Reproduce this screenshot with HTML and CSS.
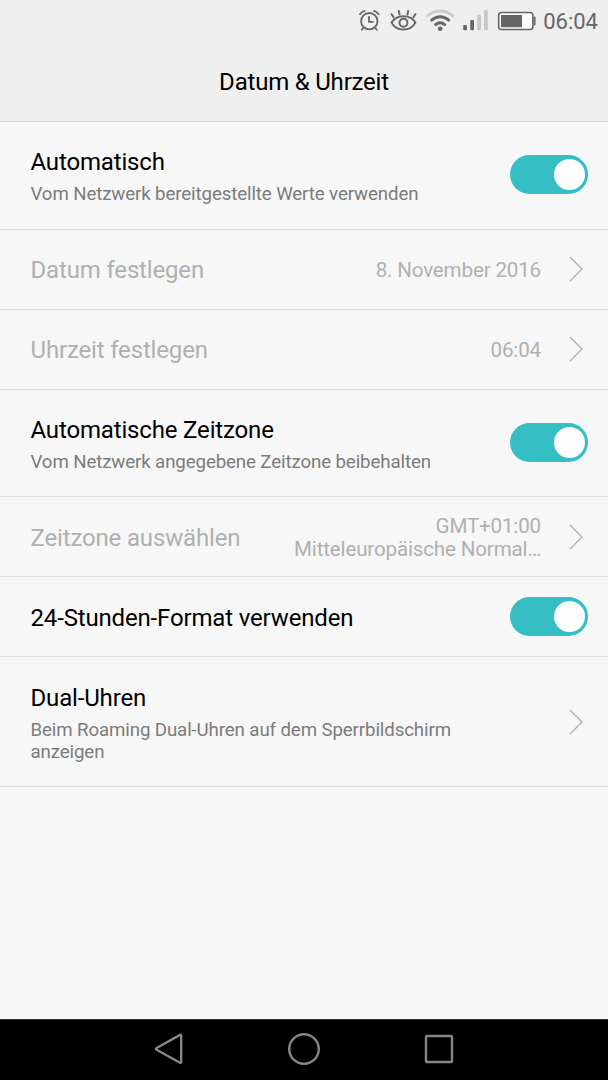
FILE: index.html
```
<!DOCTYPE html>
<html lang="de">
<head>
    <meta charset="UTF-8">
    <meta name="viewport" content="width=device-width, initial-scale=1.0">
    <title>Datum &amp; Uhrzeit</title>
    <link rel="stylesheet" href="styles.css">
</head>
<body>
    <div class="screen">
        <header class="header">
            <div class="status-bar">
                <svg class="status-icons" width="178" height="40" viewBox="358 0 178 40" fill="none" stroke="#666" stroke-width="1.8" stroke-linecap="round">
                    <!-- Wecker -->
                    <circle cx="369.3" cy="21.2" r="8.2"/>
                    <path d="M369 16.8v5h4M363.2 28l-1.4 1.8M375.4 28l1.4 1.800M360 14.2q1.6-2.600 4.600-3.400M378.600 14.200q-1.600-2.600-4.600-3.400"/>
                    <!-- Auge -->
                    <path stroke-width="2" d="M391.6 22.6C396.5 14.200 410.5 14.200 415.4 22.6C410.5 31.800 396.5 31.800 391.6 22.6Z"/>
                    <circle cx="403.5" cy="22.8" r="4" stroke-width="2"/>
                    <path stroke-width="2" d="M391.6 14.2l2 3M398.800 11l.8 3.600M408.200 11l-.8 3.600M415.400 14.200l-2 3"/>
                    <!-- WLAN -->
                    <path stroke="#c8c8c8" stroke-width="2.600" d="M427.6 15.600Q440.2 6.200 452.8 15.600"/>
                    <path stroke-width="2.800" d="M431.6 20.200Q440.2 13.400 448.8 20.200M435.6 24.600Q440.2 20.800 444.8 24.600"/>
                    <circle cx="440.2" cy="28.8" r="2.3" fill="#666" stroke="none"/>
                    <!-- Empfang -->
                    <g stroke="none">
                        <rect x="463.2" y="25" width="3.8" height="5.2" rx="1" fill="#666"/>
                        <rect x="470.2" y="20" width="3.8" height="10.2" rx="1" fill="#666"/>
                        <rect x="477.2" y="15" width="3.8" height="15.2" rx="1" fill="#c8c8c8"/>
                        <rect x="484" y="10" width="3.8" height="20.2" rx="1" fill="#c8c8c8"/>
                    </g>
                    <!-- Akku -->
                    <rect x="498.7" y="12.5" width="34.2" height="17" rx="2.8" fill="#fafafa" stroke-width="1.6"/>
                    <rect x="501" y="15" width="21" height="12.2" fill="#666" stroke="none"/>
                    <path d="M534.6 17.5v7" stroke-width="1.8"/>
                </svg>
                <span class="clock">06:04</span>
            </div>
            <h1>Datum &amp; Uhrzeit</h1>
        </header>

        <main class="settings">
            <div class="row row-two">
                <div class="text">
                    <h2>Automatisch</h2>
                    <p>Vom Netzwerk bereitgestellte Werte verwenden</p>
                </div>
                <div class="toggle"></div>
            </div>

            <div class="row row-disabled">
                <div class="text"><h2>Datum festlegen</h2></div>
                <div class="value">8. November 2016</div>
                <svg class="arrow" viewBox="0 0 14 26"><path d="M1 1l12 12L1 25"/></svg>
            </div>

            <div class="row row-disabled">
                <div class="text"><h2>Uhrzeit festlegen</h2></div>
                <div class="value">06:04</div>
                <svg class="arrow" viewBox="0 0 14 26"><path d="M1 1l12 12L1 25"/></svg>
            </div>

            <div class="row row-two">
                <div class="text">
                    <h2>Automatische Zeitzone</h2>
                    <p>Vom Netzwerk angegebene Zeitzone beibehalten</p>
                </div>
                <div class="toggle"></div>
            </div>

            <div class="row row-disabled">
                <div class="text"><h2>Zeitzone auswählen</h2></div>
                <div class="value">GMT+01:00<br>Mitteleuropäische Normal…</div>
                <svg class="arrow" viewBox="0 0 14 26"><path d="M1 1l12 12L1 25"/></svg>
            </div>

            <div class="row">
                <div class="text"><h2>24-Stunden-Format verwenden</h2></div>
                <div class="toggle"></div>
            </div>

            <div class="row row-three">
                <div class="text">
                    <h2>Dual-Uhren</h2>
                    <p>Beim Roaming Dual-Uhren auf dem Sperrbildschirm anzeigen</p>
                </div>
                <svg class="arrow" viewBox="0 0 14 26"><path d="M1 1l12 12L1 25"/></svg>
            </div>
        </main>

        <nav class="nav-bar">
            <svg width="34" height="34" viewBox="0 0 34 34"><path d="M27.6 3.1Q29.2 2.200 29.2 4V29.600Q29.2 31.500 27.6 30.500L4.600 17.800Q3.200 16.900 4.600 16Z"/></svg>
            <svg width="34" height="34" viewBox="0 0 34 34"><circle cx="17" cy="17" r="14.8"/></svg>
            <svg width="34" height="34" viewBox="0 0 34 34"><rect x="4" y="4" width="26" height="26" rx="1"/></svg>
        </nav>
    </div>
</body>
</html>
```
FILE: styles.css
```
* {
    box-sizing: border-box;
}

body {
    margin: 0;
    font-family: Roboto, "Liberation Sans", sans-serif;
    background-color: #f7f7f7;
}

h1, h2, p {
    margin: 0;
    font-weight: 400;
}

.screen {
    display: flex;
    flex-direction: column;
    width: 608px;
    height: 1080px;
}

.header {
    height: 122px;
    background-color: #efefef;
    border-bottom: 1px solid #d9d9d9;
}

.status-bar {
    display: flex;
    justify-content: flex-end;
    height: 42px;
    padding-right: 10px;
    color: #666;
}

.clock {
    margin-left: 7px;
    font-size: 22px;
    line-height: 43px;
}

.header h1 {
    font-size: 24px;
    line-height: 80px;
    letter-spacing: -0.2px;
    text-align: center;
    color: #000;
}

.settings {
    flex: 1;
}

.row {
    display: flex;
    align-items: center;
    height: 80px;
    padding: 0 20px 0 30px;
    border-bottom: 1px solid #dedede;
}

.row:nth-child(-n+3) {
    padding-bottom: 2px;
}

.row-two {
    height: 108px;
}

.row-two:nth-child(4) {
    height: 107px;
    padding-bottom: 1px;
}

.row-three {
    height: 130px;
}

.text {
    flex: 1;
}

.text h2 {
    font-size: 24px;
    line-height: 30px;
    padding-top: 2px;
    letter-spacing: -0.16px;
    color: #000;
    white-space: nowrap;
}

.text p {
    max-width: 440px;
    margin-top: 6px;
    font-size: 18.7px;
    line-height: 22px;
    letter-spacing: -0.12px;
    color: #7c7c7c;
}

.text h2,
.text p {
    margin-left: 0.5px;
}

.row-disabled .text h2,
.value {
    color: #b0b0b0;
}

.value {
    font-size: 20.6px;
    line-height: 23px;
    padding-top: 2px;
    letter-spacing: -0.17px;
    text-align: right;
    white-space: nowrap;
}

.row:nth-child(-n+3) .value {
    padding-top: 4px;
}

.arrow {
    width: 14px;
    height: 26px;
    margin: 0 5px 0 28px;
    fill: none;
    stroke: #acacac;
    stroke-width: 1.2;
}

.toggle {
    display: flex;
    justify-content: flex-end;
    width: 78px;
    height: 39px;
    padding: 4px 3px;
    border-radius: 20px;
    background-color: #35bfc5;
}

.toggle::after {
    content: "";
    width: 31px;
    height: 31px;
    border-radius: 50%;
    background-color: #fff;
}

.nav-bar {
    display: flex;
    justify-content: center;
    align-items: center;
    gap: 101px;
    height: 61px;
    padding-bottom: 2px;
    background-color: #000;
    border-top: 1px solid #333;
}

.nav-bar svg {
    fill: none;
    stroke: #868686;
    stroke-width: 2.4;
}
```
